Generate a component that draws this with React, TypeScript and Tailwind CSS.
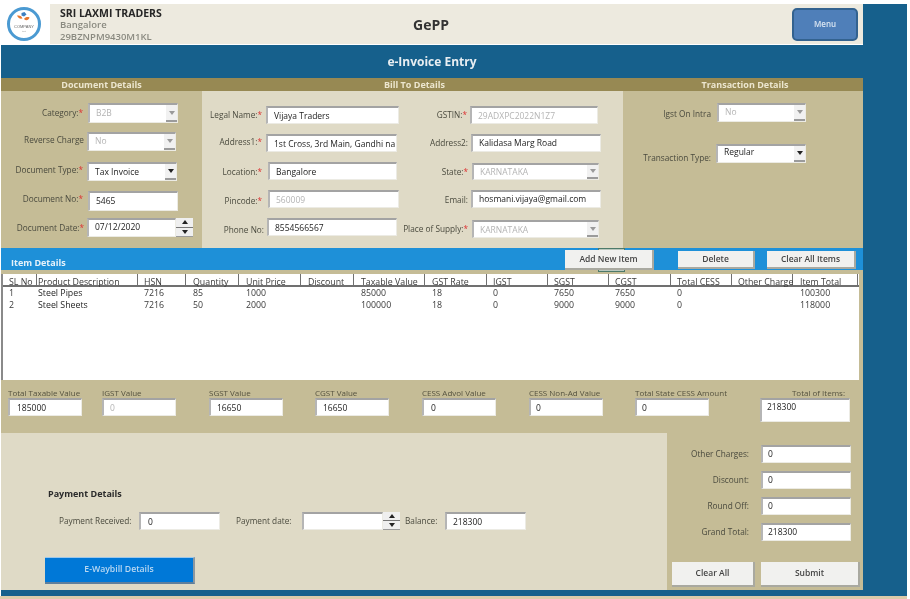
import React from "react";

const fieldBase =
  "relative flex items-center bg-white border-t-2 border-l-2 border-t-[#a3a3a3] border-l-[#b5b5b5] border-r border-b border-r-[#ecebe4] border-b-[#ecebe4] text-[8.5px] leading-[12px]";

function Arrow({ dim }: { dim?: boolean }) {
  return (
    <svg width="6" height="4" viewBox="0 0 6 4">
      <path d="M0 0H6L3 4Z" fill={dim ? "#9a9a9a" : "#222"} />
    </svg>
  );
}

function Input({
  value,
  dim,
  select,
  spin,
  box,
  pad = "pl-[6px]",
}: {
  value: string;
  dim?: boolean;
  select?: boolean;
  spin?: boolean;
  box: string;
  pad?: string;
}) {
  return (
    <div className="flex shrink-0">
      <div className={`${fieldBase} ${box} ${pad} ${dim ? "text-[#b4b4b4]" : "text-[#222]"}`}>
        <span className="whitespace-nowrap">{value}</span>
        {select && (
          <span className="absolute right-0 top-0 bottom-0 w-[11px] flex items-center justify-center bg-[#f1f1f1] border-b-2 border-b-[#9b9b9b]">
            <Arrow dim={dim} />
          </span>
        )}
      </div>
      {spin && (
        <div className="flex flex-col w-[17px] bg-[#efefef] border-b border-b-[#9b9b9b]">
          <span className="flex-1 flex items-center justify-center border-b border-b-[#777]">
            <svg width="6" height="4" viewBox="0 0 6 4">
              <path d="M0 4H6L3 0Z" fill="#222" />
            </svg>
          </span>
          <span className="flex-1 flex items-center justify-center">
            <Arrow />
          </span>
        </div>
      )}
    </div>
  );
}

function Row({
  label,
  req,
  labelW,
  className,
  children,
}: {
  label: string;
  req?: boolean;
  labelW: string;
  className: string;
  children: React.ReactNode;
}) {
  return (
    <div className={`flex items-center ${className}`}>
      <div className={`${labelW} shrink-0 text-right text-[8.25px] text-[#4a4a3e] whitespace-nowrap`}>
        {label}
        {req && <span className="text-[#d33]">*</span>}
      </div>
      {children}
    </div>
  );
}

function Button({ label, box }: { label: string; box: string }) {
  return (
    <div
      className={`flex items-center justify-center bg-[#f1f1ef] border-r-2 border-b-2 border-r-[#a9a9a0] border-b-[#a9a9a0] text-[8.5px] font-semibold text-[#444] ${box}`}
    >
      {label}
    </div>
  );
}

function Logo() {
  return (
    <div className="w-[49px] shrink-0 flex items-center pl-[5px] bg-white">
      <svg width="36" height="36" viewBox="0 0 36 36">
        <circle cx="18" cy="18" r="15.5" fill="#fff" stroke="#4b9ad2" strokeWidth="3" />
        <path d="M15.5 7l3-1 2 2.5-2.5 2-2.5-1Z" fill="#3c7fc0" />
        <path d="M11 9.5c3-.5 4.500.5 5.500 3-3 .5-4.500-.5-5.500-3Z" fill="#e8762c" />
        <path d="M18 13c1.500-2 3.500-2.500 5.500-1.500-1 3-3.500 3.500-5.500 1.500Z" fill="#e8762c" />
        <text x="18" y="21.500" fontSize="4" textAnchor="middle" fill="#666" fontFamily="Liberation Sans">
          COMPANY
        </text>
        <text x="18" y="26" fontSize="2.500" textAnchor="middle" fill="#999" fontFamily="Liberation Sans">
          text
        </text>
      </svg>
    </div>
  );
}

const cols = [
  ["SL No", "w-[34px] pl-[6px]"],
  ["Product Description", "w-[101px] pl-[1px]"],
  ["HSN", "w-[48px] pl-[6px]"],
  ["Quantity", "w-[53px] pl-[7px]"],
  ["Unit Price", "w-[62px] pl-[7px]"],
  ["Discount", "w-[53px] pl-[7px]"],
  ["Taxable Value", "w-[71px] pl-[7px]"],
  ["GST Rate", "w-[62px] pl-[7px]"],
  ["IGST", "w-[61px] pl-[6px]"],
  ["SGST", "w-[61px] pl-[6px]"],
  ["CGST", "w-[62px] pl-[6px]"],
  ["Total CESS", "w-[61px] pl-[6px]"],
  ["Other Charge", "w-[61px] pl-[6px]"],
  ["Item Total", "w-[65px] pl-[7px]"],
];

const rows = [
  ["1", "Steel Pipes", "7216", "85", "1000", "", "85000", "18", "0", "7650", "7650", "0", "", "100300"],
  ["2", "Steel Sheets", "7216", "50", "2000", "", "100000", "18", "0", "9000", "9000", "0", "", "118000"],
];

const totals = [
  { label: "Total Taxable Value", value: "185000", slot: "w-[94px] pl-[7px]", pad: "pl-[7px]" },
  { label: "IGST Value", value: "0", dim: true, slot: "w-[107px] pl-[7px]", pad: "pl-[6px]" },
  { label: "SGST Value", value: "16650", slot: "w-[106px] pl-[7px]", pad: "pl-[6px]" },
  { label: "CGST Value", value: "16650", slot: "w-[107px] pl-[7px]", pad: "pl-[6px]" },
  { label: "CESS Advol Value", value: "0", slot: "w-[107px] pl-[7px]", pad: "pl-[7px]" },
  { label: "CESS Non-Ad Value", value: "0", slot: "w-[106px] pl-[7px]", pad: "pl-[5px]" },
  { label: "Total State CESS Amount", value: "0", slot: "w-[127px] pl-[7px]", pad: "pl-[5px]" },
];

export default function App() {
  return (
    <div
      className="w-[910px] h-[599px] bg-white overflow-hidden blur-[0.45px]"
      style={{ fontFamily: '"Open Sans", "Noto Sans", sans-serif' }}
    >
      <div className="w-[907px] h-[596px] pt-1 pl-px flex">
        {/* main column */}
        <div className="w-[862px] shrink-0 flex flex-col">
          {/* header */}
          <div className="h-[40px] flex">
            <Logo />
            <div className="flex-1 bg-[#edeadf] flex items-center">
              <div className="w-[326px] pl-[10px] pt-[2px] flex flex-col leading-[12px]">
                <span className="text-[10.5px] font-bold text-[#262626]">SRI LAXMI TRADERS</span>
                <span className="text-[9.5px] font-semibold text-[#8a8a80]">Bangalore</span>
                <span className="text-[9.5px] font-semibold text-[#8a8a80]">29BZNPM9430M1KL</span>
              </div>
              <span className="w-[110px] text-center text-[14px] font-bold text-[#333]">GePP</span>
              <div className="ml-auto mr-[5px] w-[66px] h-[33px] rounded-[5px] bg-[#4f7fb9] border-2 border-[#33628f] flex items-center justify-center text-[8px] font-semibold text-[#dbe6f2]">
                Menu
              </div>
            </div>
          </div>
          {/* title band */}
          <div className="mt-px h-[33px] bg-[#16608c] flex items-center justify-center text-[12px] font-bold text-[#e8eef2]">
            e-Invoice Entry
          </div>
          {/* section headers */}
          <div className="h-[13px] bg-[#978953] flex items-center text-[9px] font-bold text-[#ece6cf] leading-none">
            <span className="w-[201px] text-center">Document Details</span>
            <span className="w-[425px] text-center">Bill To Details</span>
            <span className="flex-1 text-center">Transaction Details</span>
          </div>
          {/* details panels */}
          <div className="h-[157px] flex">
            <div className="w-[201px] bg-[#c5bc96] flex flex-col pt-3">
              <Row label="Category:" req labelW="w-[82px]" className="gap-[5px]">
                <Input value="B2B" dim select pad="pl-[6px] pb-[2px]" box="w-[90px] h-5" />
              </Row>
              <Row label="Reverse Charge" labelW="w-[83px] pb-[2px]" className="gap-[3px] mt-[9px]">
                <Input value="No" dim select pad="pl-[6px] pb-[3px]" box="w-[89px] h-[19px]" />
              </Row>
              <Row label="Document Type:" req labelW="w-[82px] pb-[2px]" className="gap-[4px] mt-[11px]">
                <Input value="Tax Invoice" select pad="pl-[6px] pb-[1px]" box="w-[90px] h-[19px]" />
              </Row>
              <Row label="Document No:" req labelW="w-[82px] pb-[3px]" className="gap-[5px] mt-[10px]">
                <Input value="5465" pad="pl-[6px] pb-[1px]" box="w-[90px] h-5" />
              </Row>
              <Row label="Document Date:" req labelW="w-[83px] pt-[2px]" className="gap-[3px] mt-[7px]">
                <Input value="07/12/2020" spin pad="pl-[6px] pb-[3px]" box="w-[89px] h-[19px]" />
              </Row>
            </div>
            <div className="w-[421px] bg-[#dfdac6] flex pt-[15px]">
              <div className="w-[199px] flex flex-col">
                <Row label="Legal Name:" req labelW="w-[60px]" className="gap-[4px]">
                  <Input value="Vijaya  Traders" box="w-[133px] h-[18px]" />
                </Row>
                <Row label="Address1:" req labelW="w-[60px] pb-[2px]" className="gap-[4px] mt-[10px]">
                  <Input value="1st Cross, 3rd Main, Gandhi na" box="w-[131px] h-[18px]" />
                </Row>
                <Row label="Location:" req labelW="w-[60px] pt-[2px]" className="gap-[6px] mt-[10px]">
                  <Input value="Bangalore" box="w-[129px] h-[18px]" />
                </Row>
                <Row label="Pincode:" req labelW="w-[60px] pt-[4px]" className="gap-[6px] mt-[10px]">
                  <Input value="560009" dim box="w-[131px] h-[18px]" />
                </Row>
                <Row label="Phone No:" labelW="w-[62px] pt-[6px]" className="gap-[3px] mt-[10px]">
                  <Input value="8554566567" box="w-[130px] h-[18px]" />
                </Row>
              </div>
              <div className="flex-1 flex flex-col">
                <Row label="GSTIN:" req labelW="w-[66px]" className="gap-[3px]">
                  <Input value="29ADXPC2022N1Z7" dim box="w-[128px] h-[18px]" />
                </Row>
                <Row label="Address2:" labelW="w-[67px]" className="gap-[3px] mt-[10px]">
                  <Input value="Kalidasa Marg Road" pad="pl-[6px] pb-[2px]" box="w-[130px] h-[18px]" />
                </Row>
                <Row label="State:" req labelW="w-[67px] pt-[2px]" className="gap-[4px] mt-[11px]">
                  <Input value="KARNATAKA" dim select box="w-[127px] h-[17px]" />
                </Row>
                <Row label="Email:" labelW="w-[67px] pt-[2px]" className="gap-[3px] mt-[10px]">
                  <Input value="hosmani.vijaya@gmail.com" pad="pl-[6px] pb-[2px]" box="w-[130px] h-[18px]" />
                </Row>
                <Row label="Place of Supply:" req labelW="w-[67px]" className="gap-[4px] mt-[12px]">
                  <Input value="KARNATAKA" dim select box="w-[127px] h-[18px]" />
                </Row>
              </div>
            </div>
            <div className="flex-1 bg-[#c5bc96] flex flex-col pt-3">
              <Row label="Igst On Intra" labelW="w-[88px] pt-[4px]" className="gap-[6px]">
                <Input value="No" dim select pad="pl-[6px] pb-[3px]" box="w-[89px] h-[19px]" />
              </Row>
              <Row label="Transaction Type:" labelW="w-[88px] pt-[10px]" className="gap-[5px] mt-5">
                <Input value="Regular" select pad="pl-[6px] pb-[3px]" box="w-[90px] h-[19px]" />
              </Row>
            </div>
          </div>
          {/* item bar */}
          <div className="h-[22px] bg-[#1e90d8] flex items-start relative">
            <span className="w-[564px] shrink-0 pl-[10px] pt-[9px] leading-[12px] text-[9px] font-bold text-[#e6f2fa]">
              Item Details
            </span>
            <div className="absolute left-[597px] top-0 w-[27px] h-[24px] border border-[#4d7a6a] bg-[#b9c7bd]" />
            <div className="relative mt-[2px]">
              <Button label="Add New Item" box="w-[89px] h-[20px]" />
            </div>
            <div className="ml-6 mt-[3px]">
              <Button label="Delete" box="w-[77px] h-[18px]" />
            </div>
            <div className="ml-3 mt-[3px]">
              <Button label="Clear All Items" box="w-[89px] h-[18px]" />
            </div>
          </div>
          {/* table */}
          <div className="h-[110px] bg-[#c5bc96] pt-1 pr-1">
            <div className="h-[106px] bg-white border-l-2 border-l-[#8a8a8a] text-[8.8px] leading-[12px] text-[#3a3a3a]">
              <div className="flex h-[13px] border-b-2 border-b-[#707070]">
                {cols.map(([name, w]) => (
                  <div
                    key={name}
                    className={`${w} shrink-0 pt-[2px] border-r border-r-[#707070] whitespace-nowrap`}
                  >
                    {name}
                  </div>
                ))}
              </div>
              <div>
                {rows.map((r) => (
                  <div key={r[0]} className="flex h-3">
                    {r.map((c, i) => (
                      <div
                        key={i}
                        className={`${cols[i][1]} shrink-0 whitespace-nowrap ${i === 1 ? "font-medium text-[#262626]" : ""}`}
                      >
                        {c}
                      </div>
                    ))}
                  </div>
                ))}
              </div>
            </div>
          </div>
          {/* totals */}
          <div className="h-[53px] bg-[#c5bc96] flex pt-[7px]">
            {totals.map((t) => (
              <div key={t.label} className={`${t.slot} shrink-0 flex flex-col`}>
                <span className="h-[11px] text-[8px] leading-[12px] text-[#55523f] whitespace-nowrap">{t.label}</span>
                <Input value={t.value} dim={t.dim} pad={t.pad} box="w-[74px] h-[18px]" />
              </div>
            ))}
            <div className="flex-1 flex flex-col pl-[5px]">
              <span className="h-[11px] w-[85px] text-right text-[8px] leading-[12px] text-[#55523f] whitespace-nowrap">
                Total of Items:
              </span>
              <Input value="218300" pad="pl-[5px] pb-[8px]" box="w-[90px] h-[24px]" />
            </div>
          </div>
          {/* bottom */}
          <div className="h-[157px] flex">
            <div className="w-[666px] bg-[#dfdac6] flex flex-col pt-[55px] pl-[47px]">
              <span className="text-[9px] font-bold text-[#2b2b2b] leading-[12px]">Payment Details</span>
              <div className="flex items-center mt-[12px] ml-[11px] text-[8.25px] text-[#4a4a3e] whitespace-nowrap">
                <span className="w-[80px]">Payment Received:</span>
                <Input value="0" pad="pl-[7px]" box="w-[81px] h-[18px]" />
                <span className="ml-4 w-[66px]">Payment date:</span>
                <Input value="" spin box="w-[81px] h-[18px]" />
                <span className="ml-[5px] w-[40px]">Balance:</span>
                <Input value="218300" box="w-[81px] h-[18px]" />
              </div>
              <div className="mt-[27px] ml-[-3px] w-[150px] h-[27px] bg-[#0078d7] border-t border-t-[#9cc7ea] border-r-2 border-b-2 border-r-[#8b97a0] border-b-[#5f7f9c] flex items-center justify-center text-[8.7px] font-semibold text-[#b9d8f2]">
                E-Waybill Details
              </div>
            </div>
            <div className="flex-1 bg-[#c5bc96] flex flex-col pt-3">
              <Row label="Other Charges:" labelW="w-[82px]" className="gap-[12px]">
                <Input value="0" pad="pl-[5px] pb-[2px]" box="w-[90px] h-[18px]" />
              </Row>
              <Row label="Discount:" labelW="w-[82px]" className="gap-[12px] mt-2">
                <Input value="0" pad="pl-[5px] pb-[2px]" box="w-[90px] h-[18px]" />
              </Row>
              <Row label="Round Off:" labelW="w-[82px]" className="gap-[12px] mt-2">
                <Input value="0" pad="pl-[5px] pb-[2px]" box="w-[90px] h-[18px]" />
              </Row>
              <Row label="Grand Total:" labelW="w-[82px]" className="gap-[12px] mt-2">
                <Input value="218300" pad="pl-[5px] pb-[2px]" box="w-[90px] h-[18px]" />
              </Row>
              <div className="flex mt-[21px] ml-[5px] gap-[6px]">
                <Button label="Clear All" box="w-[83px] h-[25px]" />
                <Button label="Submit" box="w-[99px] h-[25px]" />
              </div>
            </div>
          </div>
          <div className="flex-1 bg-[#16608c]" />
        </div>
        {/* blue right margin */}
        <div className="flex-1 bg-[#16608c]" />
      </div>
      <div className="w-[907px] h-[3px] bg-[#dccbaa]" />
    </div>
  );
}
